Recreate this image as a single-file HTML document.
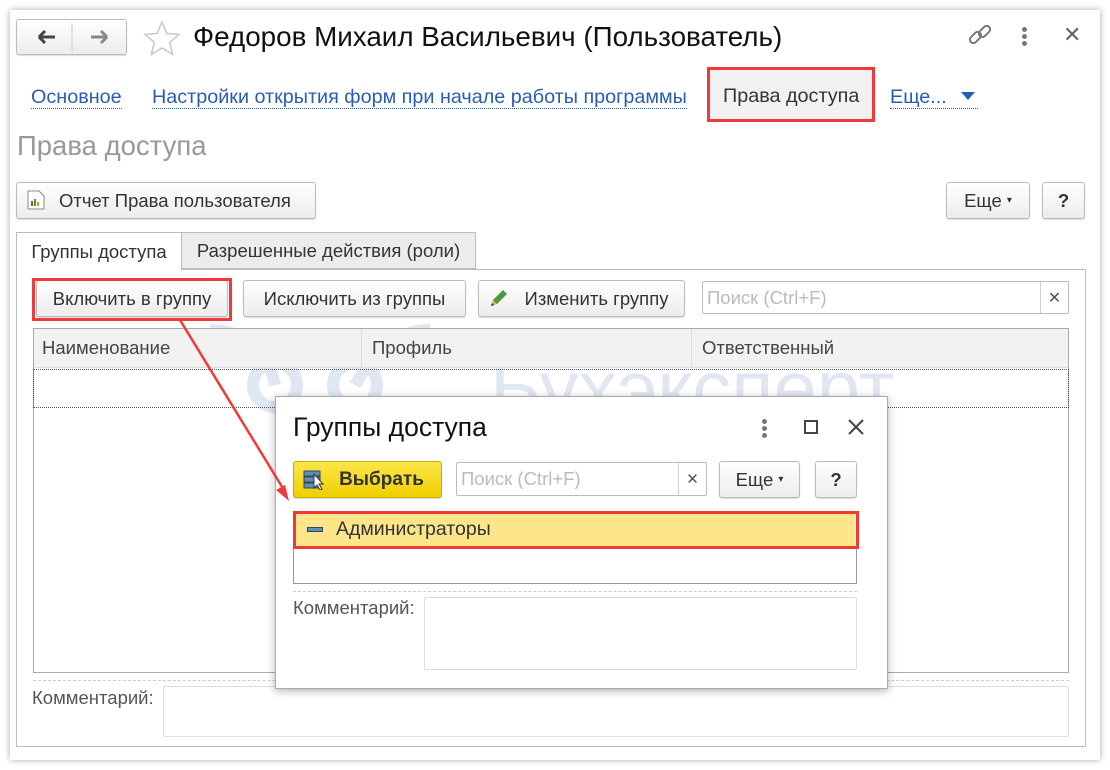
<!DOCTYPE html>
<html><head><meta charset="utf-8"><style>
*{box-sizing:border-box;margin:0;padding:0}
body{width:1110px;height:770px;background:#fff;font-family:"Liberation Sans",sans-serif;position:relative;overflow:hidden;color:#333}
.a{position:absolute}
.win{left:10px;top:10px;width:1090px;height:750px;background:#fff;box-shadow:0 0 6px rgba(0,0,0,.35)}
.btn{position:absolute;border:1px solid #bbb;border-radius:3px;background:linear-gradient(#fff,#ececec);box-shadow:0 1px 1px rgba(0,0,0,.15);font-size:18.5px;color:#333;display:flex;align-items:center;justify-content:center;white-space:nowrap}
.lnk{position:absolute;font-size:19.8px;color:#2a5db0;border-bottom:1px dotted #2a5db0;line-height:22px;white-space:nowrap}
.inp{position:absolute;border:1px solid #bbb;border-radius:2px;background:#fff;font-size:18.5px;color:#bbb;padding-left:4px;display:flex;align-items:center;white-space:nowrap}
.red{position:absolute;border:3px solid #f03a3a}
.t{position:absolute;font-size:18.5px;white-space:nowrap}
</style></head><body>
<div class="a win"></div>
<!-- nav -->
<div class="btn" style="left:16px;top:19px;width:111px;height:36px;justify-content:flex-start">
 <svg width="110" height="34" style="position:absolute;left:0;top:0"><line x1="55" y1="3" x2="55" y2="31" stroke="#ccc"/><path d="M22 17h16M22 17l6-6M22 17l6 6" stroke="#444" stroke-width="3" fill="none"/><path d="M90 17H74M90 17l-6-6M90 17l-6 6" stroke="#888" stroke-width="3" fill="none"/></svg>
</div>
<svg class="a" style="left:143px;top:20px" width="38" height="36"><path d="M19 2l4.8 11.5 12.2.9-9.3 8 2.9 12-10.6-6.5-10.6 6.5 2.9-12-9.3-8 12.2-.9z" fill="none" stroke="#c8c8c8" stroke-width="1.5"/></svg>
<div class="t" style="left:193px;top:21px;font-size:27.8px;color:#111">Федоров Михаил Васильевич (Пользователь)</div>
<svg class="a" style="left:966px;top:22px" width="28" height="28"><g fill="none" stroke="#777" stroke-width="2"><rect x="3" y="12" width="13" height="7" rx="3.5" transform="rotate(-45 9.5 15.5)"/><rect x="12" y="6" width="13" height="7" rx="3.5" transform="rotate(-45 18.5 9.5)"/></g></svg>
<div class="a" style="left:1022px;top:27px;width:5px"><div style="width:5px;height:5px;border-radius:50%;background:#777;margin-bottom:2px"></div><div style="width:5px;height:5px;border-radius:50%;background:#777;margin-bottom:2px"></div><div style="width:5px;height:5px;border-radius:50%;background:#777"></div></div>
<div class="a" style="left:1063px;top:22px;font-size:22px;color:#666">✕</div>
<!-- links -->
<div class="lnk" style="left:31px;top:86px">Основное</div>
<div class="lnk" style="left:152px;top:86px">Настройки открытия форм при начале работы программы</div>
<div class="a" style="left:710px;top:70px;width:162px;height:49px;background:#f2f2f2"></div>
<div class="t" style="left:723px;top:85px;font-size:19.8px;color:#333">Права доступа</div>
<div class="red" style="left:707px;top:67px;width:168px;height:55px"></div>
<div class="lnk" style="left:890px;top:86px;width:88px">Еще...</div>
<svg class="a" style="left:960px;top:91px" width="16" height="10"><path d="M1 1h14L8 9z" fill="#2a5db0"/></svg>
<div class="t" style="left:17px;top:130px;font-size:27.5px;color:#999">Права доступа</div>
<div class="btn" style="left:16px;top:182px;width:300px;height:37px;justify-content:flex-start;padding-left:42px">Отчет Права пользователя</div>
<svg class="a" style="left:27px;top:190px" width="18" height="20"><path d="M1 1h11l5 5v13H1z" fill="#fff" stroke="#888"/><rect x="4" y="11" width="2" height="5" fill="#d33"/><rect x="7" y="9" width="2" height="7" fill="#3a3"/><rect x="10" y="12" width="2" height="4" fill="#d90"/></svg>
<div class="btn" style="left:946px;top:182px;width:84px;height:37px">Еще&nbsp;<span style="font-size:10px">▾</span></div>
<div class="btn" style="left:1042px;top:182px;width:43px;height:37px;font-weight:bold">?</div>
<!-- tabs -->
<div class="a" style="left:16px;top:269px;width:1070px;height:478px;border:1px solid #bbb"></div>
<div class="a" style="left:181px;top:232px;width:295px;height:37px;background:#ececec;border:1px solid #bbb;font-size:18.5px;white-space:nowrap;display:flex;align-items:center;justify-content:center">Разрешенные действия (роли)</div>
<div class="a" style="left:16px;top:232px;width:166px;height:38px;background:#fff;border:1px solid #bbb;border-bottom:none;font-size:18.5px;white-space:nowrap;display:flex;align-items:center;justify-content:center">Группы доступа</div>
<!-- watermark -->
<svg class="a" style="left:190px;top:300px" width="730" height="160" opacity="0.14"><g fill="none" stroke="#2f5fa8" stroke-width="12"><circle cx="85" cy="85" r="22"/><circle cx="165" cy="85" r="22"/><path d="M20 30c40 0 60 30 65 55M240 30c-40 0-60 30-75 55"/></g><text x="300" y="115" font-size="78" fill="#2f5fa8" font-family="Liberation Sans">Бухэксперт</text></svg>
<div class="btn" style="left:36px;top:280px;width:192px;height:37px">Включить в группу</div>
<div class="red" style="left:32px;top:278px;width:200px;height:43px"></div>
<div class="btn" style="left:243px;top:280px;width:223px;height:37px">Исключить из группы</div>
<div class="btn" style="left:478px;top:280px;width:207px;height:37px;padding-left:30px">Изменить группу</div>
<svg class="a" style="left:488px;top:287px" width="22" height="22"><path d="M3 19l2-6L15 3l4 4L9 17z" fill="#4a9b3a"/><path d="M3 19l2-6 4 4z" fill="#e0b060"/><path d="M3 19l1-3 2 2z" fill="#333"/></svg>
<div class="inp" style="left:702px;top:281px;width:367px;height:33px">Поиск (Ctrl+F)</div>
<div class="a" style="left:1040px;top:282px;width:28px;height:31px;border-left:1px solid #ccc;font-size:16px;color:#555;display:flex;align-items:center;justify-content:center">✕</div>
<!-- table -->
<div class="a" style="left:33px;top:328px;width:1036px;height:345px;border:1px solid #aaa"></div>
<div class="a" style="left:34px;top:329px;width:1034px;height:39px;background:#f2f2f2;border-bottom:1px solid #ddd"></div>
<div class="a" style="left:361px;top:329px;width:1px;height:39px;background:#ddd"></div>
<div class="a" style="left:691px;top:329px;width:1px;height:39px;background:#ddd"></div>
<div class="t" style="left:42px;top:337px;color:#444">Наименование</div>
<div class="t" style="left:372px;top:337px;color:#444">Профиль</div>
<div class="t" style="left:702px;top:337px;color:#444">Ответственный</div>
<div class="a" style="left:33px;top:369px;width:1036px;height:39px;border:1px dotted #555"></div>
<div class="a" style="left:33px;top:680px;width:1036px;border-top:1px dashed #ccc"></div>
<div class="t" style="left:32px;top:687px;color:#555">Комментарий:</div>
<div class="a" style="left:163px;top:686px;width:906px;height:51px;border:1px solid #ddd;border-radius:2px"></div>
<!-- dialog -->
<div class="a" style="left:275px;top:396px;width:613px;height:293px;background:#fff;border:1px solid #aaa;box-shadow:0 2px 8px rgba(0,0,0,.3)"></div>
<div class="t" style="left:293px;top:412px;font-size:26.5px;color:#111">Группы доступа</div>
<div class="a" style="left:762px;top:419px"><div style="width:5px;height:5px;border-radius:50%;background:#777;margin-bottom:2px"></div><div style="width:5px;height:5px;border-radius:50%;background:#777;margin-bottom:2px"></div><div style="width:5px;height:5px;border-radius:50%;background:#777"></div></div>
<div class="a" style="left:804px;top:420px;width:14px;height:14px;border:2px solid #444"></div>
<svg class="a" style="left:847px;top:418px" width="18" height="18"><path d="M2 2l14 14M16 2L2 16" stroke="#444" stroke-width="2"/></svg>
<div class="btn" style="left:293px;top:461px;width:149px;height:37px;background:linear-gradient(#fbe64a,#f0cf00);border-color:#c9ad00;font-weight:bold;font-size:19px;padding-left:28px">Выбрать</div>
<svg class="a" style="left:302px;top:468px" width="24" height="22"><rect x="2" y="3" width="16" height="5" fill="#5d8fb8" stroke="#345"/><rect x="2" y="9" width="16" height="5" fill="#5d8fb8" stroke="#345"/><rect x="2" y="15" width="16" height="5" fill="#5d8fb8" stroke="#345"/><path d="M12 6v14l3-3 3 5 2-1-3-5h4z" fill="#fff" stroke="#333"/></svg>
<div class="inp" style="left:456px;top:462px;width:251px;height:34px">Поиск (Ctrl+F)</div>
<div class="a" style="left:678px;top:463px;width:28px;height:32px;border-left:1px solid #ccc;font-size:15px;color:#555;display:flex;align-items:center;justify-content:center">✕</div>
<div class="btn" style="left:719px;top:461px;width:81px;height:37px">Еще&nbsp;<span style="font-size:10px">▾</span></div>
<div class="btn" style="left:815px;top:461px;width:42px;height:37px;font-weight:bold">?</div>
<div class="a" style="left:293px;top:511px;width:564px;height:73px;border:1px solid #999"></div>
<div class="a" style="left:296px;top:514px;width:559px;height:32px;background:#fde58a"></div>
<div class="red" style="left:293px;top:511px;width:566px;height:38px"></div>
<div class="a" style="left:307px;top:527px;width:16px;height:5px;background:#5d8fb8;border:1px solid #346"></div>
<div class="t" style="left:336px;top:518px;font-size:19.5px;color:#333">Администраторы</div>
<div class="a" style="left:293px;top:591px;width:564px;border-top:1px dashed #ccc"></div>
<div class="t" style="left:293px;top:597px;color:#555">Комментарий:</div>
<div class="a" style="left:424px;top:597px;width:433px;height:73px;border:1px solid #ddd;border-radius:2px"></div>
<!-- arrow on top -->
<svg class="a" style="left:0;top:0" width="1110" height="770"><line x1="180" y1="320" x2="284" y2="490" stroke="#f03a3a" stroke-width="2.5"/><path d="M289 501l-13-11 9-5z" fill="#f03a3a"/></svg>
</body></html>
